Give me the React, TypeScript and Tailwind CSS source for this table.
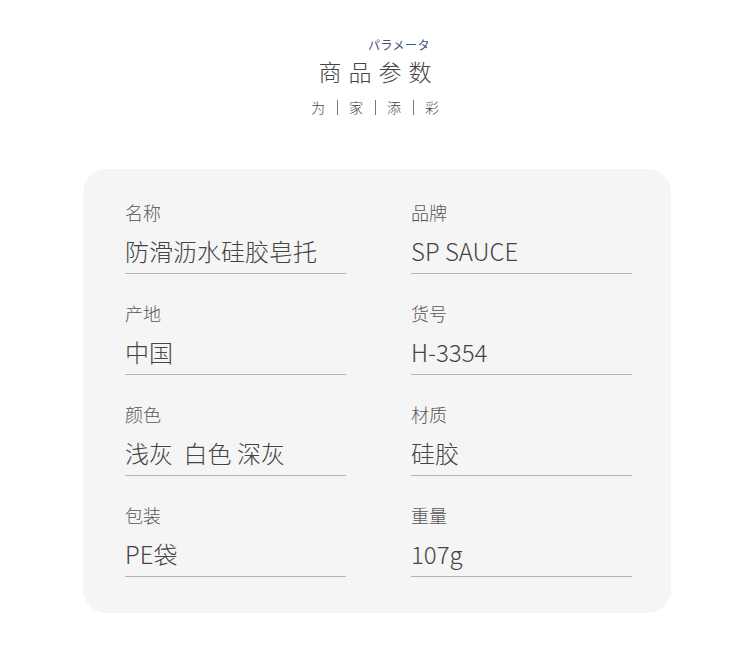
import React from 'react';

const font = { fontFamily: '"Noto Sans CJK SC", "Noto Sans", sans-serif' };

const specs: [string, string][] = [
  ['名称', '防滑沥水硅胶皂托'],
  ['品牌', 'SP SAUCE'],
  ['产地', '中国'],
  ['货号', 'H-3354'],
  ['颜色', '浅灰  白色 深灰'],
  ['材质', '硅胶'],
  ['包装', 'PE袋'],
  ['重量', '107g'],
];

const slogan = ['为', '家', '添', '彩'];

function SpecItem({ label, value }: { label: string; value: string }) {
  return (
    <div className="flex flex-col">
      <div className="text-[18px] leading-[24px] font-light text-[#555555]">{label}</div>
      <div className="mt-[12px] pb-[7px] border-b border-[#b4b4b4] text-[24px] leading-[30px] font-light text-[#444444] whitespace-pre">
        {value}
      </div>
    </div>
  );
}

export default function App() {
  return (
    <div className="w-[750px] h-[646px] bg-white flex flex-col items-center" style={font}>
      {/* 标题 */}
      <div className="flex flex-col items-center pt-[37px]">
        <div className="ml-[48px] text-[12px] leading-[16px] tracking-[0.5px] text-[#42527a]">パラメータ</div>
        <div className="mt-[3px] text-[23px] leading-[30px] tracking-[7px] pl-[7px] font-light text-[#444444]">商品参数</div>
        <div className="mt-[11px] flex items-center gap-[11.5px] text-[14px] leading-[20px] font-light text-[#444444]">
          {slogan.map((c, i) => (
            <React.Fragment key={c}>
              {i > 0 && <span className="w-px h-[15px] bg-[#777777]" />}
              <span>{c}</span>
            </React.Fragment>
          ))}
        </div>
      </div>

      {/* 参数卡片 */}
      <div className="mt-[52px] ml-[4px] w-[588px] h-[444px] rounded-[24px] bg-[#f5f5f5] pt-[31px] pl-[42px] pr-[39px]">
        <div className="grid grid-cols-[221px_221px] justify-between gap-y-[27px]">
          {specs.map(([l, v]) => (
            <SpecItem key={l} label={l} value={v} />
          ))}
        </div>
      </div>
    </div>
  );
}
